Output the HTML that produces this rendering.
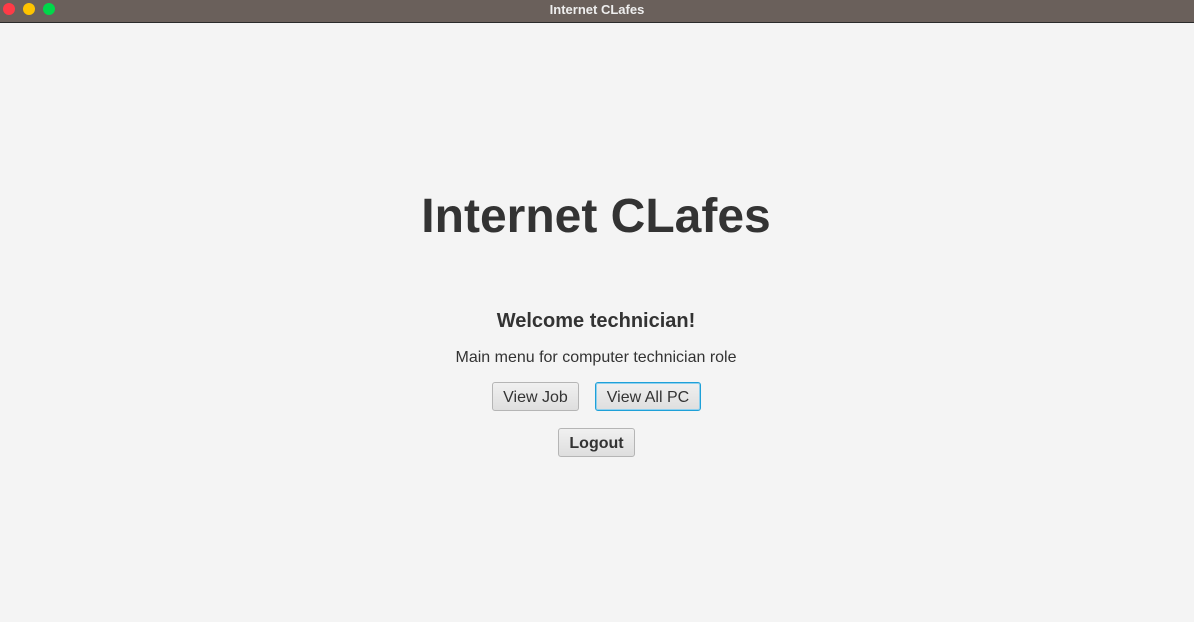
<!DOCTYPE html>
<html><head><style>
body{margin:0;width:1194px;height:622px;background:#f4f4f4;font-family:"Liberation Sans",sans-serif;position:relative;overflow:hidden;color:#333}
.bar{position:absolute;left:0;top:0;width:1194px;height:22px;background:#6a605b;border-bottom:1px solid #2a2a2a}
.bar .t{position:absolute;left:0;right:0;top:2px;text-align:center;color:#eee;font-weight:bold;font-size:13px}
.d{position:absolute;top:3px;width:12px;height:12px;border-radius:50%}
.a{position:absolute;left:0;right:0;text-align:center;white-space:nowrap}
.b{position:absolute;height:27px;border:1px solid #b5b5b5;border-radius:3px;background:linear-gradient(#f0f0f0,#dedede);font-size:16px;line-height:29px;text-align:center;color:#333}
</style></head><body>
<div class="bar"><div class="d" style="left:3px;background:#fe3b47"></div><div class="d" style="left:23px;background:#fec400"></div><div class="d" style="left:43px;background:#00d84a"></div><div class="t">Internet CLafes</div></div>
<div class="a" style="top:189px;font-size:48px;font-weight:bold;color:#333;left:-2px">Internet CLafes</div>
<div class="a" style="top:310px;font-size:20px;font-weight:bold;left:-2px">Welcome technician!</div>
<div class="a" style="top:349px;font-size:16px;left:-2px">Main menu for computer technician role</div>
<div class="b" style="left:492px;top:382px;width:85px">View Job</div>
<div class="b" style="left:595px;top:382px;width:104px;border-color:#1ea0d8;box-shadow:0 0 0 1px #8fd0ee inset">View All PC</div>
<div class="b" style="left:558px;top:428px;width:75px;font-weight:bold">Logout</div>
</body></html>
